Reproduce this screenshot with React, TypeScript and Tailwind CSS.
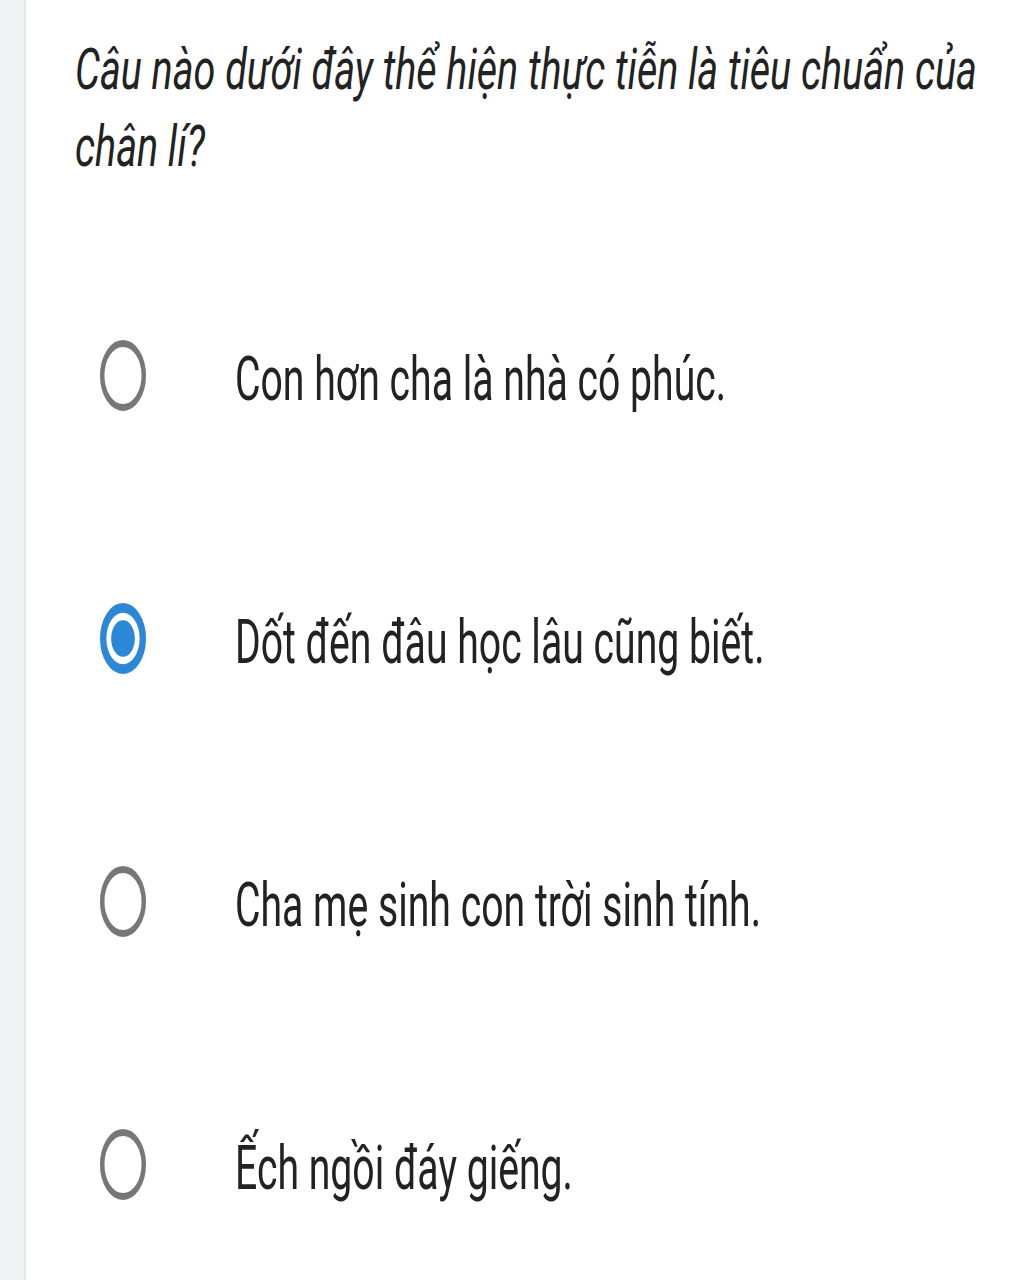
import React from "react";

function Radio({ selected }: { selected?: boolean }) {
  return (
    <svg
      viewBox="0 0 72 72"
      preserveAspectRatio="none"
      className="w-[46px] h-[71px] shrink-0 mb-[6px]"
    >
      {selected ? (
        <>
          <circle cx="36" cy="36" r="31" fill="none" stroke="#2c87d7" strokeWidth="10" />
          <circle cx="36" cy="36" r="18.5" fill="#2c87d7" />
        </>
      ) : (
        <circle cx="36" cy="36" r="32.5" fill="none" stroke="#777777" strokeWidth="7" />
      )}
    </svg>
  );
}

const options = [
  { text: "Con hơn cha là nhà có phúc.", selected: false },
  { text: "Dốt đến đâu học lâu cũng biết.", selected: true },
  { text: "Cha mẹ sinh con trời sinh tính.", selected: false },
  { text: "Ếch ngồi đáy giếng.", selected: false },
];

export default function App() {
  return (
    <div className="flex h-[1280px] w-[1024px] overflow-hidden bg-white text-[#222222] [font-family:Roboto,'Noto_Sans',sans-serif]">
      <div className="w-[26px] shrink-0 bg-[#f1f3f5] border-r-2 border-[#e6e8eb]" />
      <div className="flex min-w-0 flex-1 flex-col">
        <div className="pl-[49px] pt-[31px]">
          <p className="w-[1380px] origin-left scale-x-[0.693] text-[57px] italic leading-[77px]">
            Câu nào dưới đây thể hiện thực tiễn là tiêu chuẩn của chân lí?
          </p>
        </div>
        <div className="mt-[62px] flex flex-col">
          {options.map((o) => (
            <div key={o.text} className="flex h-[263px] shrink-0 items-center pl-[74px]">
              <Radio selected={o.selected} />
              <span className="ml-[89px] inline-block origin-left scale-x-[0.632] whitespace-nowrap text-[62px] leading-none">
                {o.text}
              </span>
            </div>
          ))}
        </div>
      </div>
    </div>
  );
}
